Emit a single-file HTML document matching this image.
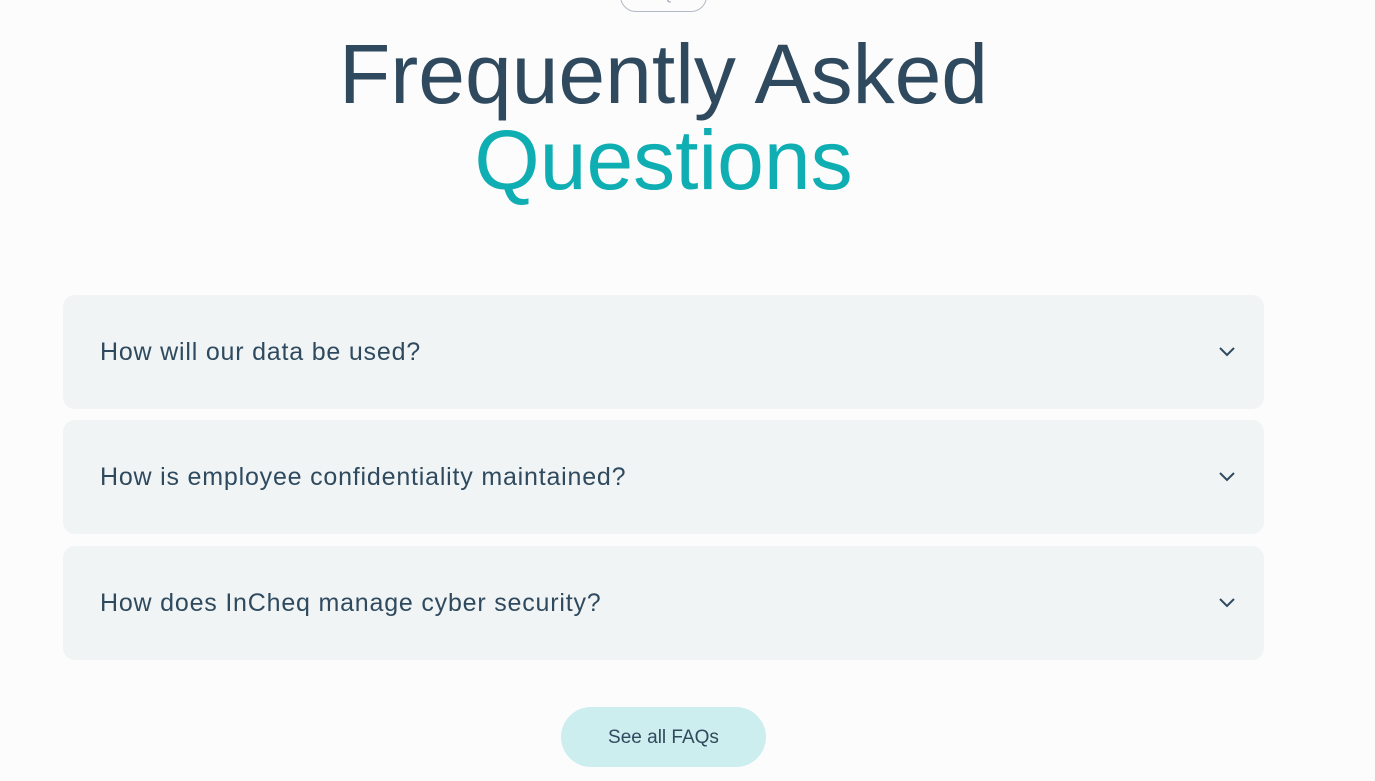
<!DOCTYPE html>
<html><head><style>
body{margin:0;width:1375px;height:781px;background:#fcfcfc;font-family:"Liberation Sans",sans-serif;position:relative;overflow:hidden}
.pill{position:absolute;left:620px;top:-20px;width:87px;height:32px;border:1.5px solid #b3b8c8;border-radius:16px;box-sizing:border-box;text-align:center;color:#9ca2b0;font-size:14px;line-height:28px;letter-spacing:1px}
h1{position:absolute;left:0;width:1327px;top:31px;margin:0;text-align:center;font-weight:normal;font-size:84px;line-height:86px;color:#2f4a5e}
h1 span{color:#0eaeb2}
.card{position:absolute;left:63px;width:1201px;height:114px;background:#f0f4f5;border-radius:12px;color:#2f4a5e;font-size:25px;letter-spacing:0.8px}
.card p{margin:0;position:absolute;left:37px;top:43px}
.card svg{position:absolute;left:1156px;top:52px}
.btn{position:absolute;left:561px;top:707px;width:205px;height:60px;border-radius:30px;background:#cdeeef;color:#2f4a5e;font-size:19px;text-align:center;line-height:61px}
</style></head><body>
<div class="pill">FAQS</div>
<h1>Frequently Asked<br><span>Questions</span></h1>
<div class="card" style="top:295px"><p>How will our data be used?</p><svg width="16" height="10" viewBox="0 0 16 10"><path d="M1 1L8 8L15 1" fill="none" stroke="#2f4a5e" stroke-width="2"/></svg></div>
<div class="card" style="top:420px"><p>How is employee confidentiality maintained?</p><svg width="16" height="10" viewBox="0 0 16 10"><path d="M1 1L8 8L15 1" fill="none" stroke="#2f4a5e" stroke-width="2"/></svg></div>
<div class="card" style="top:546px"><p>How does InCheq manage cyber security?</p><svg width="16" height="10" viewBox="0 0 16 10"><path d="M1 1L8 8L15 1" fill="none" stroke="#2f4a5e" stroke-width="2"/></svg></div>
<div class="btn">See all FAQs</div>
</body></html>
